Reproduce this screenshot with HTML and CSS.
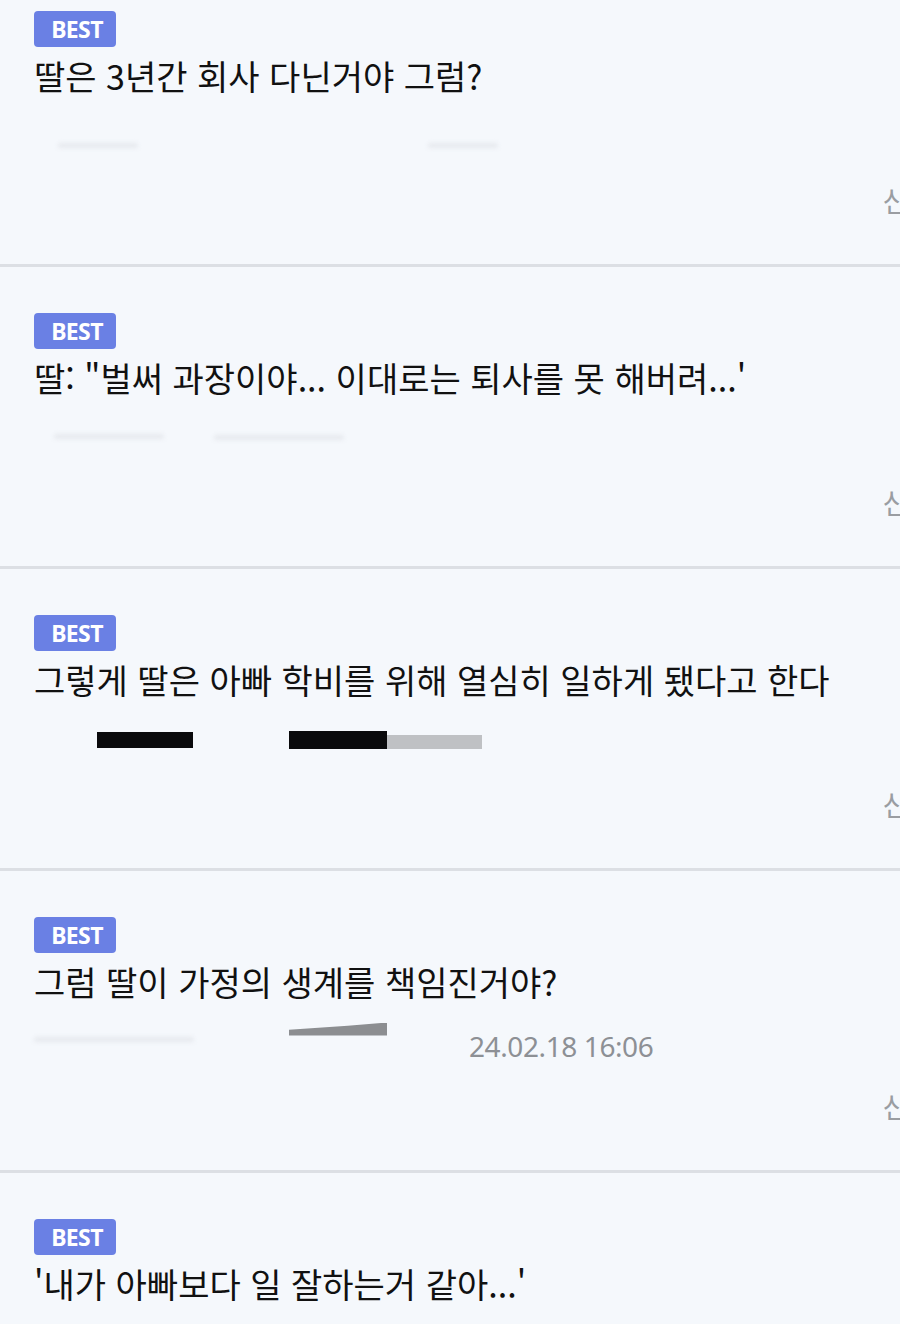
FILE: index.html
```html
<!DOCTYPE html>
<html lang="ko">
<head>
<meta charset="utf-8">
<title>BEST 댓글</title>
<link rel="stylesheet" href="styles.css">
</head>
<body>
<ul class="list">
  <li class="comment first">
    <span class="badge">BEST</span>
    <p class="title">딸은 3년간 회사 다닌거야 그럼?</p>
    <div class="meta">
      <span class="smudge faint s1"></span>
      <span class="smudge faint s2"></span>
    </div>
    <div class="actions"><button class="report">신고</button></div>
  </li>
  <li class="comment">
    <span class="badge">BEST</span>
    <p class="title">딸: "벌써 과장이야... 이대로는 퇴사를 못 해버려...'</p>
    <div class="meta">
      <span class="smudge faint s3"></span>
      <span class="smudge faint s4"></span>
    </div>
    <div class="actions"><button class="report">신고</button></div>
  </li>
  <li class="comment">
    <span class="badge">BEST</span>
    <p class="title">그렇게 딸은 아빠 학비를 위해 열심히 일하게 됐다고 한다</p>
    <div class="meta">
      <span class="redact r1"></span>
      <span class="redact-group">
        <span class="redact r2"></span><span class="grey-bar"></span>
      </span>
    </div>
    <div class="actions"><button class="report">신고</button></div>
  </li>
  <li class="comment">
    <span class="badge">BEST</span>
    <p class="title">그럼 딸이 가정의 생계를 책임진거야?</p>
    <div class="meta">
      <span class="smudge faint s5"></span>
      <span class="wedge"></span>
      <span class="date">24.02.18 16:06</span>
    </div>
    <div class="actions"><button class="report">신고</button></div>
  </li>
  <li class="comment">
    <span class="badge">BEST</span>
    <p class="title">'내가 아빠보다 일 잘하는거 같아...'</p>
  </li>
</ul>
</body>
</html>
```

FILE: styles.css
```css
html, body {
  margin: 0;
  padding: 0;
  background: #f5f8fc;
  overflow: hidden;
}

body {
  font-family: "Noto Sans CJK KR", "Noto Sans", sans-serif;
  color: #111;
}

.list {
  list-style: none;
  margin: 0;
  padding: 0;
}

.comment {
  display: flex;
  flex-direction: column;
  align-items: flex-start;
  padding: 46px 34px 44px;
  border-bottom: 3px solid #dcdfe4;
}

.comment.first {
  padding-top: 11px;
}

.badge {
  display: inline-flex;
  align-items: center;
  justify-content: center;
  box-sizing: border-box;
  width: 82px;
  height: 36px;
  padding-left: 4px;
  background: #6a80e4;
  color: #fff;
  border-radius: 4px;
  font-family: "Noto Sans", "Noto Sans CJK KR", sans-serif;
  font-weight: 700;
  font-size: 23px;
  letter-spacing: -0.6px;
}

.title {
  margin: 8px 0 0;
  font-size: 34px;
  line-height: 42px;
  font-weight: 400;
  letter-spacing: 0;
  white-space: nowrap;
}

.meta {
  display: flex;
  align-items: center;
  margin-top: 26px;
  height: 34px;
  width: 100%;
}

.smudge {
  display: block;
  height: 5px;
  border-radius: 3px;
  filter: blur(2px);
}

.faint {
  background: #e6e9ee;
}

.s1 { width: 80px; margin-left: 24px; margin-top: 10px; }
.s2 { width: 70px; margin-left: 290px; margin-top: 10px; }
.s3 { width: 110px; margin-left: 20px; margin-top: -12px; }
.s4 { width: 130px; margin-left: 50px; margin-top: -10px; }
.s5 { width: 160px; margin-left: 0; margin-top: -14px; }

.redact {
  display: block;
  background: #0a0a0c;
}

.r1 {
  width: 96px;
  height: 16px;
  margin-left: 63px;
  margin-top: -8px;
}

.redact-group {
  display: flex;
  align-items: flex-end;
  margin-left: 96px;
  margin-top: -8px;
}

.r2 {
  width: 98px;
  height: 18px;
}

.grey-bar {
  display: block;
  width: 95px;
  height: 14px;
  background: #bfc1c4;
}

.wedge {
  display: block;
  width: 98px;
  height: 13px;
  margin-left: 95px;
  margin-top: -34px;
  background: #8c8e91;
  clip-path: polygon(0 55%, 60% 25%, 100% 0, 100% 100%, 0 100%);
}

.date {
  margin-left: 82px;
  font-family: "Noto Sans", "Noto Sans CJK KR", sans-serif;
  font-size: 28px;
  line-height: 34px;
  color: #8d9095;
  letter-spacing: -0.4px;
}

.actions {
  display: flex;
  justify-content: flex-end;
  align-self: stretch;
  margin-top: 23px;
  margin-right: -68px;
}

.report {
  background: none;
  border: none;
  padding: 0;
  font-family: "Noto Sans CJK KR", sans-serif;
  font-size: 28px;
  line-height: 40px;
  color: #9a9da2;
}
```
